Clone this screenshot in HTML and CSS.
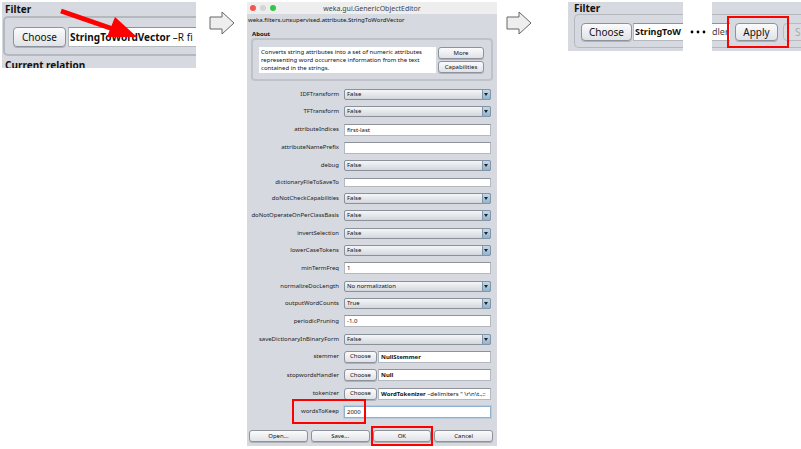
FILE: index.html
```
<!DOCTYPE html>
<html lang="en">
<head>
<meta charset="utf-8">
<title>StringToWordVector setup</title>
<link rel="stylesheet" href="styles.css">
</head>
<body>
<main class="steps">
  <section class="panel panel-start">
    <h2 class="panel-title">Filter</h2>
    <div class="filter-box">
      <button class="btn btn-large" type="button">Choose</button>
      <div class="value value-large"><b>StringToWordVector</b> –R fi</div>
    </div>
    <h2 class="panel-title panel-next">Current relation</h2>
    <svg class="pointer" viewBox="0 0 100 36" aria-hidden="true"><path d="M3 4 L55 22" stroke="#f00" stroke-width="5"/><path d="M57 10 L79 30 L49 30 Z" fill="#f00"/></svg>
  </section>

  <svg class="next" viewBox="0 0 26 24" aria-hidden="true"><path d="M1 6H13V1L25 12L13 23V18H1Z" fill="#eee" stroke="#666"/></svg>

  <form class="dialog">
    <header class="titlebar">
      <span class="dot dot-red"></span><span class="dot dot-grey"></span><span class="dot dot-green"></span>
      <h1 class="title">weka.gui.GenericObjectEditor</h1>
    </header>
    <p class="classname">weka.filters.unsupervised.attribute.StringToWordVector</p>
    <h2 class="about-title">About</h2>
    <div class="about">
      <p class="about-text">Converts string attributes into a set of numeric attributes representing word occurrence information from the text contained in the strings.</p>
      <div class="about-buttons">
        <button class="btn" type="button">More</button>
        <button class="btn" type="button">Capabilities</button>
      </div>
    </div>
    <div class="fields">
      <div class="row"><label for="idf">IDFTransform</label><div class="combo"><select id="idf"><option>False</option></select></div></div>
      <div class="row"><label for="tf">TFTransform</label><div class="combo"><select id="tf"><option>False</option></select></div></div>
      <div class="row"><label for="indices">attributeIndices</label><input class="value" id="indices" value="first-last"></div>
      <div class="row"><label for="prefix">attributeNamePrefix</label><input class="value" id="prefix"></div>
      <div class="row"><label for="debug">debug</label><div class="combo"><select id="debug"><option>False</option></select></div></div>
      <div class="row"><label for="dict">dictionaryFileToSaveTo</label><input class="value value-thin" id="dict"></div>
      <div class="row"><label for="check">doNotCheckCapabilities</label><div class="combo"><select id="check"><option>False</option></select></div></div>
      <div class="row"><label for="perclass">doNotOperateOnPerClassBasis</label><div class="combo"><select id="perclass"><option>False</option></select></div></div>
      <div class="row"><label for="invert">invertSelection</label><div class="combo"><select id="invert"><option>False</option></select></div></div>
      <div class="row"><label for="lower">lowerCaseTokens</label><div class="combo"><select id="lower"><option>False</option></select></div></div>
      <div class="row"><label for="minfreq">minTermFreq</label><input class="value" id="minfreq" value="1"></div>
      <div class="row"><label for="norm">normalizeDocLength</label><div class="combo"><select id="norm"><option>No normalization</option></select></div></div>
      <div class="row"><label for="counts">outputWordCounts</label><div class="combo"><select id="counts"><option>True</option></select></div></div>
      <div class="row"><label for="pruning">periodicPruning</label><input class="value" id="pruning" value="-1.0"></div>
      <div class="row"><label for="binary">saveDictionaryInBinaryForm</label><div class="combo"><select id="binary"><option>False</option></select></div></div>
      <div class="row"><label for="stemmer">stemmer</label><div class="chooser"><button class="btn" id="stemmer" type="button">Choose</button><div class="value"><b>NullStemmer</b></div></div></div>
      <div class="row"><label for="stop">stopwordsHandler</label><div class="chooser"><button class="btn" id="stop" type="button">Choose</button><div class="value"><b>Null</b></div></div></div>
      <div class="row"><label for="token">tokenizer</label><div class="chooser"><button class="btn" id="token" type="button">Choose</button><div class="value"><b>WordTokenizer</b> –delimiters " \r\n\t.,;:</div></div></div>
      <div class="row"><label for="keep">wordsToKeep</label><input class="value value-focus" id="keep" value="2000"><span class="mark mark-keep"></span></div>
    </div>
    <footer class="actions">
      <button class="btn" type="button">Open...</button>
      <button class="btn" type="button">Save...</button>
      <div class="marked"><button class="btn" type="button">OK</button><span class="mark mark-ok"></span></div>
      <button class="btn" type="button">Cancel</button>
    </footer>
  </form>

  <svg class="next" viewBox="0 0 26 24" aria-hidden="true"><path d="M1 6H13V1L25 12L13 23V18H1Z" fill="#eee" stroke="#666"/></svg>

  <section class="panel panel-end">
    <h2 class="panel-title">Filter</h2>
    <div class="filter-box">
      <button class="btn btn-large" type="button">Choose</button>
      <div class="value value-large"><b>StringToW</b></div>
    </div>
  </section>
  <svg class="dots" viewBox="0 0 29 10" aria-hidden="true"><circle cx="9" cy="5" r="1.4"/><circle cx="15" cy="5" r="1.4"/><circle cx="21" cy="5" r="1.4"/></svg>
  <section class="panel panel-apply">
    <div class="filter-box">
      <div class="value value-large">dler</div>
      <div class="marked"><button class="btn btn-large" type="button">Apply</button><span class="mark mark-apply"></span></div>
      <button class="btn btn-large" type="button" disabled>S</button>
    </div>
  </section>
</main>
</body>
</html>
```
FILE: styles.css
```
*, *::before, *::after { box-sizing: border-box; }
body {
  margin: 0;
  background: #fff;
  color: #111;
  font: 6px/8px "Noto Sans", "Open Sans", sans-serif;
}
h1, h2, p { margin: 0; font: inherit; }
button, input, select { font: inherit; color: inherit; margin: 0; padding: 0; min-width: 0; }

.steps {
  display: grid;
  grid-template-columns: 194fr 51fr 250fr 71fr 115fr 29fr 89fr;
  align-items: start;
  height: 100vh;
  padding: 2px 0 3px 2px;
}
.next { width: 26px; height: 24px; margin-top: 9px; justify-self: center; }
.next:nth-of-type(2) { justify-self: start; margin-left: 9px; }

/* shared controls */
.value {
  flex: 1;
  min-width: 0;
  width: 100%;
  height: 12px;
  padding: 0 2px;
  overflow: hidden;
  white-space: nowrap;
  line-height: 10px;
  background: #fff;
  border: 1px solid #b4b8bf;
  border-top-color: #8e939b;
  border-radius: 0;
}
.btn {
  height: 12px;
  border: 1px solid #8e939b;
  border-radius: 3px;
  background: linear-gradient(#fbfbfc, #dfe2e7);
  box-shadow: 0 1px 0 #aeb2b8;
  white-space: nowrap;
  line-height: 9px;
}
.marked { position: relative; }
.mark { position: absolute; border: 2px solid #f00; pointer-events: none; }

/* cropped filter panels */
.panel {
  position: relative;
  overflow: hidden;
  background: #d6d9df;
  min-width: 0;
  font-size: 10px;
  line-height: 14px;
}
.panel-title { font-weight: bold; padding-left: 3px; }
.panel-next { height: 10px; margin-top: 2px; }
.filter-box {
  display: flex;
  align-items: center;
  gap: 2px;
  height: 40px;
  padding: 2px 0 0 8px;
  margin-left: 1px;
  border: 2px solid #b5b8be;
  border-right: 0;
  border-radius: 5px 0 0 5px;
}
.value-large { height: 20px; line-height: 18px; padding: 0 1px; border-right: 0; }
.btn-large { flex: none; width: 53px; height: 20px; border-radius: 4px; line-height: 18px; }

.panel-end, .panel-apply { height: 49px; font-size: 9px; }
.panel-end .panel-title { height: 12px; line-height: 12px; padding-left: 6px; font-size: 10px; }
.panel-end .filter-box { padding-left: 6px; margin-left: 6px; gap: 1px; border-width: 1px; height: 34px; }
.panel-end .btn-large, .panel-apply .btn-large { height: 18px; line-height: 16px; font-size: 10px; }
.panel-end .btn-large { width: 51px; }
.panel-end .value { height: 18px; line-height: 16px; }
.panel-apply { padding-top: 12px; }
.panel-apply .filter-box { padding: 2px 0 0; margin: 0; gap: 5px; border-width: 1px 0; border-radius: 0; height: 34px; }
.panel-apply .value { flex: none; width: 18px; height: 18px; line-height: 16px; padding: 0; border-left: 0; color: #444; }
.panel-apply .btn-large { display: block; width: 43px; }
.panel-apply .btn:disabled { width: 30px; text-align: left; padding-left: 11px; color: #aaa; border-color: #bbb; background: #d9dce1; box-shadow: none; }
.mark-apply { inset: -7px -11px -7px -8px; }
.pointer { position: absolute; left: 56px; top: 5px; width: 100px; height: 36px; }
.dots { width: 29px; height: 10px; margin-top: 25px; justify-self: center; }

/* editor dialog */
.dialog {
  display: flex;
  flex-direction: column;
  height: 100%;
  min-width: 0;
  background: #d6d9df;
}
.titlebar { position: relative; display: flex; gap: 4px; align-items: center; height: 12px; padding-left: 3px; background: #eee; }
.title { position: absolute; inset: 0; text-align: center; line-height: 13px; font-size: 7px; color: #444; }
.dot { width: 6px; height: 6px; border-radius: 50%; }
.dot-red { background: #f6544e; }
.dot-grey { background: #d5d5d5; }
.dot-green { background: #35c649; }
.classname { padding: 2px 0 0 1px; }
.about-title { margin-top: 6px; padding-left: 5px; font-weight: bold; }
.about {
  display: flex;
  gap: 2px;
  height: 43px;
  margin: 0 4px;
  padding: 7px 7px 7px 6px;
  border: 2px solid #bfc2c8;
  border-radius: 4px;
}
.about-text { flex: 1; padding: 1px 2px; background: #fff; height: 26px; }
.about-buttons { display: grid; gap: 2px; width: 46px; grid-auto-rows: 12px; }
.fields { flex: 1; display: flex; flex-direction: column; justify-content: space-between; padding: 8px 6px 12px 0; }
.row { position: relative; display: grid; grid-template-columns: 92fr 147fr; column-gap: 5px; align-items: center; }
.row label { justify-self: end; white-space: nowrap; line-height: 9px; color: #222; }
.value-thin { height: 9px; }
.value-focus { border: 1px solid #8fb1d0; box-shadow: 0 0 0 1px #b6cde1; }
.combo { position: relative; height: 11px; }
.combo select {
  display: block;
  appearance: none;
  width: 100%;
  height: 11px;
  padding: 0 2px;
  line-height: 9px;
  border: 1px solid #8b9199;
  border-radius: 2px;
  background: linear-gradient(#f5f6f8, #d3d7dd);
}
.combo::before {
  content: "";
  position: absolute;
  right: 0;
  top: 0;
  width: 9px;
  height: 11px;
  border: 1px solid #7f95aa;
  border-radius: 0 2px 2px 0;
  background: linear-gradient(#c5d7e8, #94b3cd);
  pointer-events: none;
}
.combo::after {
  content: "";
  position: absolute;
  right: 3px;
  top: 4px;
  border: 2px solid transparent;
  border-top: 3px solid #222;
  border-bottom: 0;
  pointer-events: none;
}
.chooser { display: flex; gap: 1px; }
.chooser .btn { width: 33px; }
.actions { display: grid; grid-template-columns: repeat(4, 1fr); gap: 3px; padding: 0 4px 4px 2px; }
.actions .btn { width: 100%; display: block; }
.mark-keep { left: 45px; right: 125px; top: -7px; bottom: -6px; }
.mark-ok { inset: -4px -2px; }
```
